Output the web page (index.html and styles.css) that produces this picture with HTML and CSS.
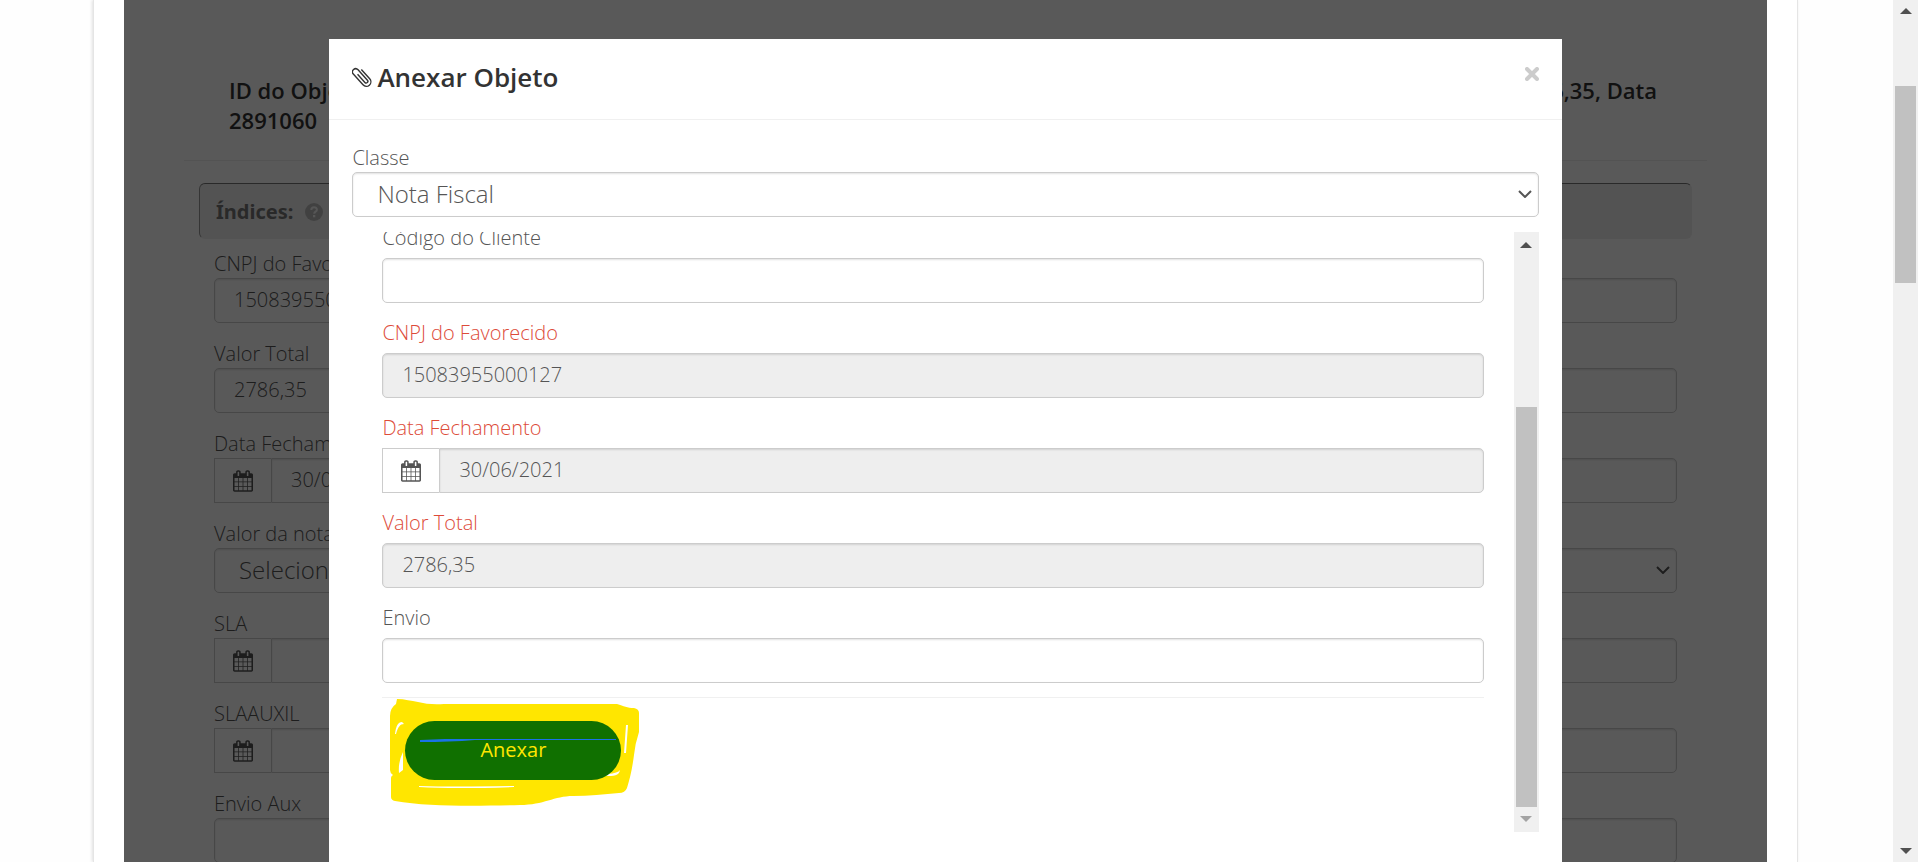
FILE: index.html
```html
<!DOCTYPE html>
<html lang="pt-BR">
<head>
    <meta charset="UTF-8">
    <meta name="viewport" content="width=device-width, initial-scale=1.0">
    <title>Anexar Objeto</title>
    <link rel="stylesheet" href="styles.css">
</head>
<body>

<svg class="sprite" aria-hidden="true">
    <symbol id="calendario" viewBox="0 0 1664 1792">
        <path fill="currentColor" d="M128 1664h288v-288h-288v288zM480 1664h320v-288h-320v288zM128 1312h288v-320h-288v320zM480 1312h320v-320h-320v320zM128 928h288v-288h-288v288zM864 1664h320v-288h-320v288zM480 928h320v-288h-320v288zM1248 1664h288v-288h-288v288zM864 1312h320v-320h-320v320zM512 448v-288q0-13-9.5-22.5t-22.5-9.5h-64q-13 0-22.5 9.5t-9.5 22.5v288q0 13 9.5 22.5t22.5 9.5h64q13 0 22.5-9.5t9.5-22.5zM1248 1312h288v-320h-288v320zM864 928h320v-288h-320v288zM1248 928h288v-288h-288v288zM1280 448v-288q0-13-9.5-22.5t-22.5-9.5h-64q-13 0-22.5 9.5t-9.5 22.5v288q0 13 9.5 22.5t22.5 9.5h64q13 0 22.5-9.5t9.5-22.5zM1664 384v1280q0 52-38 90t-90 38h-1408q-52 0-90-38t-38-90v-1280q0-52 38-90t90-38h128v-96q0-66 47-113t113-47h64q66 0 113 47t47 113v96h384v-96q0-66 47-113t113-47h64q66 0 113 47t47 113v96h128q52 0 90 38t38 90z"/>
    </symbol>
    <symbol id="seta" viewBox="0 0 14 8">
        <path d="M1 1l6 6 6-6" fill="none" stroke="currentColor" stroke-width="2"/>
    </symbol>
</svg>

<div class="pagina">
    <main class="conteudo">
        <div class="cartao">
            <div class="visualizador">

                <!-- Formulário do objeto -->
                <div class="objeto">
                    <h4 class="objeto-titulo">
                        <span class="objeto-linha"><span>ID do Objeto</span><span>2786,35, Data</span></span>
                        <span>2891060</span>
                    </h4>
                    <div class="indices">
                        <strong>Índices:</strong>
                        <svg class="ajuda" viewBox="0 0 18 18">
                            <circle cx="9" cy="9" r="9" fill="#bbb"/>
                            <path d="M6.3 7c0-3.600 5.600-3.500 5.600-.3 0 2-2.700 1.900-2.700 4" fill="none" stroke="#f5f5f5" stroke-width="2"/>
                            <path d="M8 12h2.300v2.300H8z" fill="#f5f5f5"/>
                        </svg>
                    </div>
                    <form class="campos">
                        <div class="campo">
                            <label for="cnpj">CNPJ do Favorecido</label>
                            <input type="text" id="cnpj" class="entrada" value="15083955000127">
                        </div>
                        <div class="campo">
                            <label for="valor">Valor Total</label>
                            <input type="text" id="valor" class="entrada" value="2786,35">
                        </div>
                        <div class="campo">
                            <label for="data">Data Fechamento</label>
                            <div class="grupo">
                                <span class="icone"><svg><use href="#calendario"/></svg></span>
                                <input type="text" id="data" class="entrada" value="30/06/2021">
                            </div>
                        </div>
                        <div class="campo">
                            <label for="nota">Valor da nota</label>
                            <div class="selecao">
                                <select id="nota" class="entrada"><option>Selecione</option></select>
                                <svg class="seta"><use href="#seta"/></svg>
                            </div>
                        </div>
                        <div class="campo">
                            <label for="sla">SLA</label>
                            <div class="grupo">
                                <span class="icone"><svg><use href="#calendario"/></svg></span>
                                <input type="text" id="sla" class="entrada">
                            </div>
                        </div>
                        <div class="campo">
                            <label for="slaauxil">SLAAUXIL</label>
                            <div class="grupo">
                                <span class="icone"><svg><use href="#calendario"/></svg></span>
                                <input type="text" id="slaauxil" class="entrada">
                            </div>
                        </div>
                        <div class="campo">
                            <label for="envioaux">Envio Aux</label>
                            <input type="text" id="envioaux" class="entrada">
                        </div>
                    </form>
                </div>

                <!-- Janela modal -->
                <div class="fundo">
                    <div class="modal" role="dialog" aria-labelledby="modal-titulo">
                        <div class="modal-topo">
                            <svg class="clipe" viewBox="0 0 20 22">
                                <path transform="translate(10 11) rotate(-42)" d="M4.500-6V6.500a4.500 4.500 0 0 1-9 0V-8a3.200 3.200 0 0 1 6.400 0V6a1.700 1.700 0 0 1-3.400 0V-5" fill="none" stroke="currentColor" stroke-width="1.400"/>
                            </svg>
                            <h4 id="modal-titulo">Anexar Objeto</h4>
                            <button type="button" class="fechar" aria-label="Fechar">
                                <svg viewBox="0 0 14 14"><path d="M2 2l10 10M12 2L2 12" stroke="currentColor" stroke-width="4" stroke-linecap="round"/></svg>
                            </button>
                        </div>
                        <form class="modal-corpo">
                            <div class="campo">
                                <label for="classe">Classe</label>
                                <div class="selecao">
                                    <select id="classe" class="entrada"><option>Nota Fiscal</option></select>
                                    <svg class="seta"><use href="#seta"/></svg>
                                </div>
                            </div>
                            <div class="rolagem">
                                <div class="lista">
                                    <div class="campo">
                                        <label for="m-codigo">Código do Cliente</label>
                                        <input type="text" id="m-codigo" class="entrada">
                                    </div>
                                    <div class="campo obrigatorio">
                                        <label for="m-cnpj">CNPJ do Favorecido</label>
                                        <input type="text" id="m-cnpj" class="entrada" value="15083955000127" readonly>
                                    </div>
                                    <div class="campo obrigatorio">
                                        <label for="m-data">Data Fechamento</label>
                                        <div class="grupo">
                                            <span class="icone"><svg><use href="#calendario"/></svg></span>
                                            <input type="text" id="m-data" class="entrada" value="30/06/2021" readonly>
                                        </div>
                                    </div>
                                    <div class="campo obrigatorio">
                                        <label for="m-valor">Valor Total</label>
                                        <input type="text" id="m-valor" class="entrada" value="2786,35" readonly>
                                    </div>
                                    <div class="campo">
                                        <label for="m-envio">Envio</label>
                                        <input type="text" id="m-envio" class="entrada">
                                    </div>
                                    <div class="acoes">
                                        <div class="destaque">
                                            <svg class="marcador" viewBox="0 0 252 110">
                                                <path fill="#ffe600" d="M8 1C16 1 22 3 29 4Q40 7 55 6H228C235 8 238 10 245 10Q250 11 250 15V34Q246 46 245 57C243 72 241 80 238 90Q236 95 230 95C215 96 200 98 184 98C165 98 155 107 131 107C90 108 40 109 6 103Q2 102 2 99V80Q2 78 4 77Q1 75 1 72V18Q1 10 7 6z"/>
                                                <path fill="#fff" d="M6 36C7 28 9 24 13 24L15 26C11 26 9 29 7 36zM10 75Q9 64 14 54V72zM237 27h2L237 55h-2zM219 76Q229 75 231 72C230 78 225 78 216 78zM30 88Q65 89 125 88V89Q65 91 30 89z"/>
                                            </svg>
                                            <button type="submit" class="botao">Anexar</button>
                                            <svg class="traco" viewBox="0 0 200 5">
                                                <path fill="#1a73e8" d="M0 2L25 1Q100 1 196 1V2H55Q30 4 0 4z"/>
                                            </svg>
                                        </div>
                                    </div>
                                </div>
                                <div class="barra fim" aria-hidden="true"><span class="polegar"></span></div>
                            </div>
                        </form>
                    </div>
                </div>

            </div>
        </div>
    </main>
    <div class="barra" aria-hidden="true"><span class="polegar"></span></div>
</div>

</body>
</html>
```
FILE: styles.css
```css
* {
    box-sizing: border-box;
}

body {
    margin: 0;
    font-family: "Open Sans", sans-serif;
    font-size: 20px;
    font-weight: 300;
    line-height: 26px;
    color: #555;
    background-color: #fefefe;
}

h4 {
    margin: 0;
    color: #333;
}

.sprite {
    position: absolute;
    width: 0;
    height: 0;
}

.pagina {
    display: flex;
    height: 100vh;
    overflow: hidden;
}

.conteudo {
    flex: 1;
    padding: 0 95px 0 93px;
}

.cartao {
    padding: 0 30px;
    background-color: #fff;
    border: solid #e5e5e5;
    border-width: 0 1px;
    box-shadow: -1px 0 3px rgba(0, 0, 0, 0.12);
}

.visualizador {
    position: relative;
    height: 100vh;
    overflow: hidden;
}

/* Formulário do objeto */
.objeto {
    padding: 75px 60px 0;
}

.objeto-titulo {
    display: flex;
    flex-direction: column;
    padding: 0 50px 25px 45px;
    font-size: 22px;
    font-weight: 600;
    line-height: 30px;
    border-bottom: 1px solid #eee;
}

.objeto-linha {
    display: flex;
    justify-content: space-between;
}

.indices {
    display: flex;
    align-items: center;
    gap: 12px;
    height: 56px;
    margin: 22px 15px 0;
    padding: 2px 16px 0;
    font-family: "Noto Sans", sans-serif;
    color: #777;
    background-color: #eee;
    border: 1px solid #eee;
    border-top-color: #777;
    border-left-color: #999;
    border-radius: 6px;
}

.indices strong {
    font-weight: 700;
}

.ajuda {
    width: 18px;
    height: 18px;
}

.campos {
    padding: 12px 30px 0;
}

.campo {
    display: flex;
    flex-direction: column;
}

.campos .campo {
    margin-bottom: 18px;
}

.campo label {
    height: 27px;
}

.entrada {
    flex: 1 0 auto;
    width: 100%;
    height: 45px;
    padding: 0 19px 2px;
    font-family: inherit;
    font-size: 20px;
    font-weight: 300;
    color: #555;
    background-color: #fff;
    border: 1px solid #ccc;
    border-radius: 5px;
    box-shadow: inset 0 1px 2px rgba(0, 0, 0, 0.12);
}

.entrada:read-only:not(select) {
    background-color: #eee;
}

.selecao {
    position: relative;
    display: flex;
}

.selecao .entrada {
    padding-left: 24px;
    font-size: 24px;
    appearance: none;
}

.seta {
    position: absolute;
    top: 18px;
    right: 7px;
    width: 14px;
    height: 8px;
    pointer-events: none;
}

.grupo {
    display: flex;
}

.grupo .entrada {
    flex: 1;
    min-width: 0;
    border-radius: 0 5px 5px 0;
}

.icone {
    display: flex;
    align-items: center;
    justify-content: center;
    width: 57px;
    border: 1px solid #ccc;
    border-right: 0;
}

.icone svg {
    width: 20px;
    height: 22px;
}

/* Janela modal */
.fundo {
    position: absolute;
    inset: 0;
    display: flex;
    justify-content: center;
    padding-top: 39px;
    background-color: rgba(0, 0, 0, 0.65);
}

.modal {
    width: 75%;
    background-color: #fff;
}

.modal-topo {
    display: flex;
    align-items: center;
    gap: 5px;
    height: 81px;
    padding: 0 23px 4px;
    color: #333;
    border-bottom: 1px solid #f0f0f0;
}

.modal-topo h4 {
    flex: 1;
    font-size: 26px;
    font-weight: 600;
}

.clipe {
    width: 20px;
    height: 22px;
}

.fechar {
    display: flex;
    align-self: flex-start;
    margin-top: 28px;
    padding: 0;
    color: #ccc;
    background: none;
    border: 0;
    cursor: pointer;
}

.fechar svg {
    width: 14px;
    height: 14px;
}

.modal-corpo {
    padding: 25px 23px 0;
}

.rolagem {
    display: flex;
    height: 600px;
    margin-top: 15px;
    overflow: hidden;
}

.lista {
    flex: 1;
    display: flex;
    flex-direction: column;
    justify-content: flex-end;
    gap: 14px;
    padding: 0 30px 52px;
}

.lista label {
    height: 36px;
    line-height: 32px;
}

.obrigatorio label {
    color: #dd4b39;
}

.acoes {
    padding: 23px;
    padding-bottom: 0;
    border-top: 1px solid #f0f0f0;
}

.destaque {
    position: relative;
    width: 216px;
}

.marcador {
    position: absolute;
    top: -23px;
    left: -16px;
    width: 252px;
    height: 110px;
}

.traco {
    position: absolute;
    top: 17px;
    left: 15px;
    width: 200px;
    height: 5px;
}

.botao {
    position: relative;
    display: block;
    width: 100%;
    height: 59px;
    padding: 0 0 2px;
    font-family: inherit;
    font-size: 20px;
    color: #ffe600;
    background-color: #107000;
    border: 0;
    border-radius: 30px;
    cursor: pointer;
}

/* Barras de rolagem */
.barra {
    display: flex;
    flex-direction: column;
    align-items: center;
    width: 25px;
    padding: 8px 2px;
    background-color: #f0f0f0;
}

.barra::before,
.barra::after {
    content: "";
    border: 6px solid transparent;
    border-top-width: 0;
    border-bottom: 6px solid #505050;
}

.barra::after {
    margin-top: auto;
    border-top: 6px solid #505050;
    border-bottom-width: 0;
}

.polegar {
    width: 21px;
    height: 197px;
    margin-top: 72px;
    background-color: #c1c1c1;
}

.fim {
    padding: 10px 2px;
}

.fim .polegar {
    height: 400px;
    margin-top: 159px;
}

.fim::after {
    border-top-color: #a3a3a3;
}
```
